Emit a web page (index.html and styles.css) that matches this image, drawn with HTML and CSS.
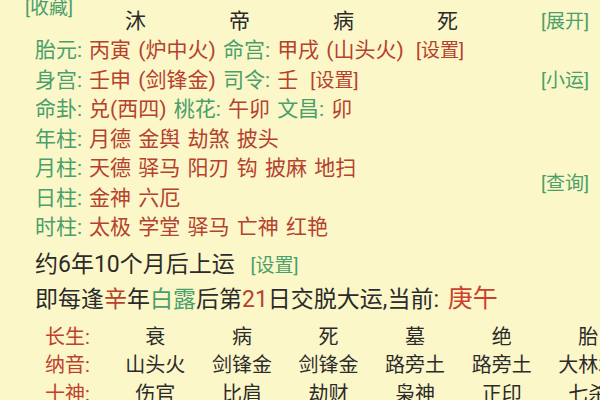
FILE: index.html
```html
<!DOCTYPE html>
<html lang="zh-CN">
<head>
    <meta charset="UTF-8">
    <meta name="viewport" content="width=device-width, initial-scale=1.0">
    <title>排盘</title>
    <link rel="stylesheet" href="styles.css">
</head>
<body>
    <div class="page">
        <div class="pillars">
            <span class="fav btn green">[收藏]</span>
            <span class="cell">桑柘木</span>
            <span class="cell"></span>
            <span class="cell"></span>
            <span class="cell">大溪水</span>
            <span class="cell"></span>
            <span class="cell">沐</span>
            <span class="cell">帝</span>
            <span class="cell">病</span>
            <span class="cell">死</span>
            <span class="btn green">[展开]</span>
        </div>

        <div class="info">
            <div class="lines">
                <div class="line"><span class="k">胎元:</span><span class="v">丙寅 (炉中火)</span> <span class="k">命宫:</span><span class="v">甲戌 (山头火)</span> <span class="btn red">[设置]</span></div>
                <div class="line"><span class="k">身宫:</span><span class="v">壬申 (剑锋金)</span> <span class="k">司令:</span><span class="v">壬</span> <span class="btn red">[设置]</span></div>
                <div class="line"><span class="k">命卦:</span><span class="v">兑(西四)</span> <span class="k">桃花:</span><span class="v">午卯</span> <span class="k">文昌:</span><span class="v">卯</span></div>
                <div class="line"><span class="k">年柱:</span><span class="v">月德 金舆 劫煞 披头</span></div>
                <div class="line"><span class="k">月柱:</span><span class="v">天德 驿马 阳刃 钩 披麻 地扫</span></div>
                <div class="line"><span class="k">日柱:</span><span class="v">金神 六厄</span></div>
                <div class="line"><span class="k">时柱:</span><span class="v">太极 学堂 驿马 亡神 红艳</span></div>
            </div>
            <div class="side">
                <span class="btn green small-yun">[小运]</span>
                <span class="btn green query">[查询]</span>
            </div>
        </div>

        <div class="yun">
            <div class="yun-line">约6年10个月后上运 <span class="btn green">[设置]</span></div>
            <div class="yun-line">即每逢<span class="red">辛</span>年<span class="green">白露</span>后第<span class="red">21</span>日交脱大运,当前: <span class="now">庚午</span></div>
        </div>

        <div class="dayun">
            <span class="label">长生:</span>
            <span>衰</span><span>病</span><span>死</span><span>墓</span><span>绝</span><span>胎</span>
            <span class="label">纳音:</span>
            <span>山头火</span><span>剑锋金</span><span>剑锋金</span><span>路旁土</span><span>路旁土</span><span>大林木</span>
            <span class="label">十神:</span>
            <span>伤官</span><span>比肩</span><span>劫财</span><span>枭神</span><span>正印</span><span>七杀</span>
        </div>
    </div>
</body>
</html>
```

FILE: styles.css
```css
html, body {
    margin: 0;
    padding: 0;
    overflow: hidden;
}
body {
    background: #fbf7c9;
    color: #2b2b2b;
    font-family: Roboto, "Noto Sans CJK SC", sans-serif;
    width: 600px;
    height: 400px;
}
.page {
    width: 600px;
}
.green {
    color: #4a9f6b;
}
.red {
    color: #b5412e;
}
.btn {
    font-size: 19px;
    white-space: nowrap;
}

/* 四柱 */
.pillars {
    display: grid;
    grid-template-columns: 125px repeat(4, 104px) 1fr;
    grid-template-rows: 32px 29px;
    margin-top: -25px;
    font-size: 21px;
    line-height: 29px;
}
.pillars .fav {
    grid-row: 1 / 3;
    grid-column: 1;
    align-self: center;
    padding: 4px 0 0 25px;
}

/* 胎元 命宫 神煞 */
.info {
    display: grid;
    grid-template-columns: 1fr auto;
    padding: 0 11px 0 35px;
}
.line {
    font-size: 21px;
    line-height: 29.5px;
    white-space: nowrap;
    word-spacing: 2px;
}
.line .btn {
    margin-left: 5px;
}
.k {
    color: #4a9f6b;
    margin-right: 7px;
}
.v {
    color: #b5412e;
}
.side {
    display: flex;
    flex-direction: column;
    line-height: 29.5px;
}
.small-yun {
    margin-top: 29.5px;
}
.query {
    margin-top: 74px;
}

/* 起运 */
.yun {
    padding-left: 35px;
    margin-top: 6px;
    font-size: 23px;
    white-space: nowrap;
}
.yun-line {
    line-height: 32px;
}
.yun-line + .yun-line {
    line-height: 34px;
}
.yun .btn {
    margin-left: 10px;
}
.now {
    color: #cc402c;
    font-size: 25px;
    margin-left: 3px;
}

/* 大运 */
.dayun {
    display: grid;
    grid-template-columns: 67px repeat(6, 86.6px);
    padding-left: 45px;
    margin-top: 6px;
    font-size: 20px;
    line-height: 28.5px;
    text-align: center;
    white-space: nowrap;
}
.dayun .label {
    color: #c0412e;
    text-align: left;
}
```
